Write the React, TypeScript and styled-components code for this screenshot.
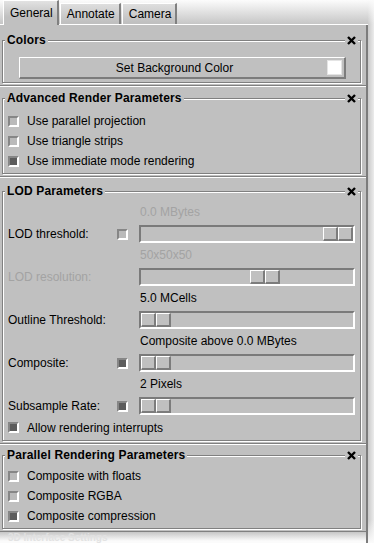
import styled, { createGlobalStyle } from 'styled-components';

const GlobalStyle = createGlobalStyle`
  html, body {
    margin: 0;
    padding: 0;
    background: #fff;
  }
  body {
    font-family: "Liberation Sans", Arial, sans-serif;
    font-size: 12px;
    color: #000;
  }
`;

const Screen = styled.div`
  width: 374px;
  height: 543px;
  overflow: hidden;
  display: flex;
  background: #fff;
`;

const Window = styled.div`
  width: 368px;
  display: flex;
  flex-direction: column;
`;

const Shadow = styled.div`
  flex: 1;
  background: linear-gradient(#fbfbfb 0, rgba(255, 255, 255, 0) 24px),
    linear-gradient(to bottom, rgba(255, 255, 255, 0) 520px, #fbfbfb 543px),
    linear-gradient(to right, #cacaca, #ececec);
`;

const TabBar = styled.div`
  height: 24px;
  display: flex;
  align-items: flex-end;
  gap: 1px;
  padding-left: 3px;
  border-bottom: 1px solid #fff;
  background: linear-gradient(#fcfcfc, #c6c6c6);
`;

const Tab = styled.div<{ $active?: boolean }>`
  box-sizing: border-box;
  height: ${(p) => (p.$active ? 25 : 21)}px;
  margin-bottom: ${(p) => (p.$active ? -1 : 0)}px;
  display: flex;
  align-items: center;
  padding: 0 4px 0 6px;
  border-top: 1px solid #fff;
  border-left: 1px solid #fff;
  border-right: 2px solid #808080;
  background: ${(p) =>
    p.$active
      ? 'linear-gradient(#e2e2e2, #c0c0c0 16px)'
      : 'linear-gradient(#dedede, #c0c0c0 18px)'};
`;

const Panel = styled.div`
  flex: 1;
  display: flex;
  flex-direction: column;
  background: #c0c0c0;
  border-right: 2px solid #7c7c7c;
`;

const Section = styled.section<{ $pt: number; $first?: boolean }>`
  padding: ${(p) => p.$pt}px 5px 2px 2px;
  border-top: ${(p) => (p.$first ? 'none' : '1px solid #fff')};
  border-bottom: 1px solid #808080;
`;

const Frame = styled.div`
  margin-top: 7px;
  border: 1px solid #808080;
  box-shadow: inset 1px 1px 0 #fff, 1px 1px 0 #fff;
`;

const FrameHead = styled.div`
  height: 14px;
  margin: -8px 2px 0 2px;
  display: flex;
  align-items: center;
  justify-content: space-between;
`;

const FrameTitle = styled.span`
  background: #c0c0c0;
  padding: 0 2px;
  font-weight: bold;
  line-height: 14px;
  letter-spacing: 0.15px;
`;

const Close = styled.span`
  background: #c0c0c0;
  padding: 0 2px;
  height: 14px;
  display: flex;
  align-items: center;
`;

const ButtonWrap = styled.div`
  padding: 10px 14px 3px 16px;
`;

const ColorButton = styled.button`
  box-sizing: border-box;
  width: 100%;
  height: 22px;
  display: flex;
  align-items: center;
  padding: 0 2px 0 2px;
  border-style: solid;
  border-width: 1px 2px 2px 1px;
  border-color: #fff #7c7c7c #7c7c7c #fff;
  background: #c0c0c0;
  font: inherit;
  color: #000;
`;

const ButtonText = styled.span`
  flex: 1;
  text-align: center;
`;

const Swatch = styled.span`
  width: 15px;
  height: 15px;
  box-sizing: border-box;
  background: #fff;
  border: 1px solid #e4e4e4;
`;

const CheckList = styled.div<{ $pt: number }>`
  display: flex;
  flex-direction: column;
  padding: ${(p) => p.$pt}px 0 2px 5px;
`;

const CheckRow = styled.label`
  height: 20px;
  display: flex;
  align-items: center;
  gap: 8px;
`;

const Box = styled.span<{ $on?: boolean }>`
  box-sizing: border-box;
  width: 11px;
  height: 11px;
  flex: none;
  border: 2px solid;
  border-color: #868686 #fff #fff #868686;
  background: ${(p) => (p.$on ? '#5c5c5c' : '#bababa')};
`;

const LodGrid = styled.div`
  display: grid;
  grid-template-columns: 109px 22px 1fr;
  align-items: center;
  padding: 4px 5px 2px 5px;
`;

const Value = styled.div<{ $off?: boolean }>`
  grid-column: 3;
  height: 21px;
  line-height: 21px;
  padding-left: 1px;
  color: ${(p) => (p.$off ? '#a3a3a3' : '#000')};
`;

const RowLabel = styled.div<{ $off?: boolean }>`
  grid-column: 1;
  height: 22px;
  line-height: 22px;
  white-space: nowrap;
  color: ${(p) => (p.$off ? '#a3a3a3' : '#000')};
`;

const CheckCell = styled.div`
  grid-column: 2;
  display: flex;
`;

const Trough = styled.div`
  grid-column: 3;
  box-sizing: border-box;
  height: 18px;
  display: flex;
  border: 2px solid;
  border-color: #7a7a7a #fff #fff #7a7a7a;
`;

const Thumb = styled.div<{ $at: number }>`
  display: flex;
  margin-left: ${(p) => p.$at}px;
`;

const ThumbHalf = styled.div`
  box-sizing: border-box;
  width: 15px;
  border-style: solid;
  border-width: 1px 2px 2px 1px;
  border-color: #fff #7c7c7c #7c7c7c #fff;
`;

const WideCheck = styled(CheckRow)`
  grid-column: 1 / 4;
  height: 21px;
  gap: 8px;
`;

const Fade = styled.div`
  flex: 1;
  overflow: hidden;
  white-space: nowrap;
  padding: 0 0 0 8px;
  font-size: 10px;
  line-height: 11px;
  font-weight: bold;
  color: #e2e2e2;
  background: linear-gradient(#c6c6c6, #fbfbfb 9px);
`;

function CloseIcon() {
  return (
    <svg width="9" height="9" viewBox="0 0 9 9">
      <path
        d="M1 1 L8 8 M8 1 L1 8"
        stroke="#000"
        strokeWidth="2.4"
        fill="none"
      />
    </svg>
  );
}

function Group(props: { title: string; children: React.ReactNode }) {
  return (
    <Frame>
      <FrameHead>
        <FrameTitle>{props.title}</FrameTitle>
        <Close>
          <CloseIcon />
        </Close>
      </FrameHead>
      {props.children}
    </Frame>
  );
}

function Slider(props: { at: number }) {
  return (
    <Trough>
      <Thumb $at={props.at}>
        <ThumbHalf />
        <ThumbHalf />
      </Thumb>
    </Trough>
  );
}

const advanced = [
  { label: 'Use parallel projection', on: false },
  { label: 'Use triangle strips', on: false },
  { label: 'Use immediate mode rendering', on: true },
];

const parallel = [
  { label: 'Composite with floats', on: false },
  { label: 'Composite RGBA', on: false },
  { label: 'Composite compression', on: true },
];

type LodRow = {
  value: string;
  valueOff?: boolean;
  label: string;
  labelOff?: boolean;
  check?: boolean;
  at: number;
};

const lodRows: LodRow[] = [
  { value: '0.0 MBytes', valueOff: true, label: 'LOD threshold:', check: false, at: 182 },
  { value: '50x50x50', valueOff: true, label: 'LOD resolution:', labelOff: true, at: 109 },
  { value: '5.0 MCells', label: 'Outline Threshold:', at: 0 },
  { value: 'Composite above 0.0 MBytes', label: 'Composite:', check: true, at: 0 },
  { value: '2 Pixels', label: 'Subsample Rate:', check: true, at: 0 },
];

export default function App() {
  return (
    <>
      <GlobalStyle />
      <Screen>
        <Window>
          <TabBar>
            <Tab $active>General</Tab>
            <Tab>Annotate</Tab>
            <Tab>Camera</Tab>
          </TabBar>
          <Panel>
            <Section $pt={8} $first>
              <Group title="Colors">
                <ButtonWrap>
                  <ColorButton>
                    <ButtonText>Set Background Color</ButtonText>
                    <Swatch />
                  </ColorButton>
                </ButtonWrap>
              </Group>
            </Section>

            <Section $pt={4}>
              <Group title="Advanced Render Parameters">
                <CheckList $pt={6}>
                  {advanced.map((item) => (
                    <CheckRow key={item.label}>
                      <Box $on={item.on} />
                      {item.label}
                    </CheckRow>
                  ))}
                </CheckList>
              </Group>
            </Section>

            <Section $pt={6}>
              <Group title="LOD Parameters">
                <LodGrid>
                  {lodRows.map((row) => (
                    <Row key={row.label} row={row} />
                  ))}
                  <WideCheck>
                    <Box $on />
                    Allow rendering interrupts
                  </WideCheck>
                </LodGrid>
              </Group>
            </Section>

            <Section $pt={3}>
              <Group title="Parallel Rendering Parameters">
                <CheckList $pt={4}>
                  {parallel.map((item) => (
                    <CheckRow key={item.label}>
                      <Box $on={item.on} />
                      {item.label}
                    </CheckRow>
                  ))}
                </CheckList>
              </Group>
            </Section>

            <Fade>3D Interface Settings</Fade>
          </Panel>
        </Window>
        <Shadow />
      </Screen>
    </>
  );
}

function Row({ row }: { row: LodRow }) {
  return (
    <>
      <Value $off={row.valueOff}>{row.value}</Value>
      <RowLabel $off={row.labelOff}>{row.label}</RowLabel>
      <CheckCell>{row.check !== undefined && <Box $on={row.check} />}</CheckCell>
      <Slider at={row.at} />
    </>
  );
}
